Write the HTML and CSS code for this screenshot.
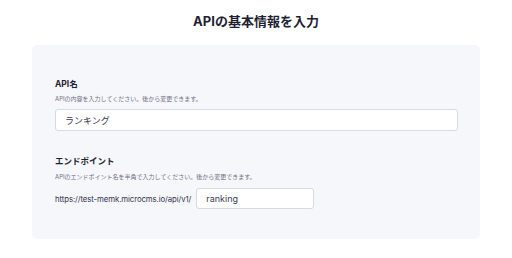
FILE: index.html
```html
<!DOCTYPE html>
<html lang="ja">
<head>
<meta charset="UTF-8">
<meta name="viewport" content="width=device-width, initial-scale=1.0">
<title>APIの基本情報を入力</title>
<link rel="stylesheet" href="styles.css">
</head>
<body>
  <h1 class="page-title">APIの基本情報を入力</h1>

  <section class="card">
    <!-- API名 -->
    <div class="field">
      <label class="field-label" for="apiName">API名</label>
      <p class="field-help">APIの内容を入力してください。後から変更できます。</p>
      <input class="text-input wide" type="text" id="apiName" value="ランキング">
    </div>

    <!-- エンドポイント -->
    <div class="field">
      <label class="field-label" for="endpoint">エンドポイント</label>
      <p class="field-help">APIのエンドポイント名を半角で入力してください。後から変更できます。</p>
      <div class="endpoint-row">
        <span class="endpoint-base">https://test-memk.microcms.io/api/v1/</span>
        <input class="text-input short" type="text" id="endpoint" value="ranking">
      </div>
    </div>
  </section>
</body>
</html>
```
FILE: styles.css
```css
body { margin: 0; padding: 0; background: #fff; color: #21213b; font-family: Inter, "Noto Sans CJK JP", sans-serif; }
.page-title { margin: 0; padding-top: 12px; height: 33px; font-size: 13px; font-weight: 700; text-align: center; line-height: 18px; color: #1f1f33; }
.card { margin: 0 32px; width: 448px; box-sizing: border-box; background: #f6f7fb; border-radius: 5px; padding: 33px 23px 30px 23px; height: 194px; }
.field { display: flex; flex-direction: column; }
.field + .field { margin-top: 24px; }
.field-label { font-size: 8.5px; font-weight: 700; line-height: 12px; color: #1f1f33; }
.field-help { margin: 5px 0 6px; font-size: 6px; line-height: 8px; color: #6f6f85; }
.field + .field .field-help { margin-top: 6px; margin-bottom: 7px; }
.text-input { box-sizing: border-box; height: 22px; border: 1px solid #d9d9e6; border-radius: 3px; background: #fff; font-family: inherit; font-size: 9px; color: #3a3a52; padding: 0 9px; outline: none; }
.text-input.wide { width: 403px; }
.text-input.short { width: 118px; height: 21px; }
.endpoint-row { display: flex; align-items: center; gap: 5px; }
.endpoint-base { font-size: 7.8px; color: #33334d; letter-spacing: -0.1px; }
```
